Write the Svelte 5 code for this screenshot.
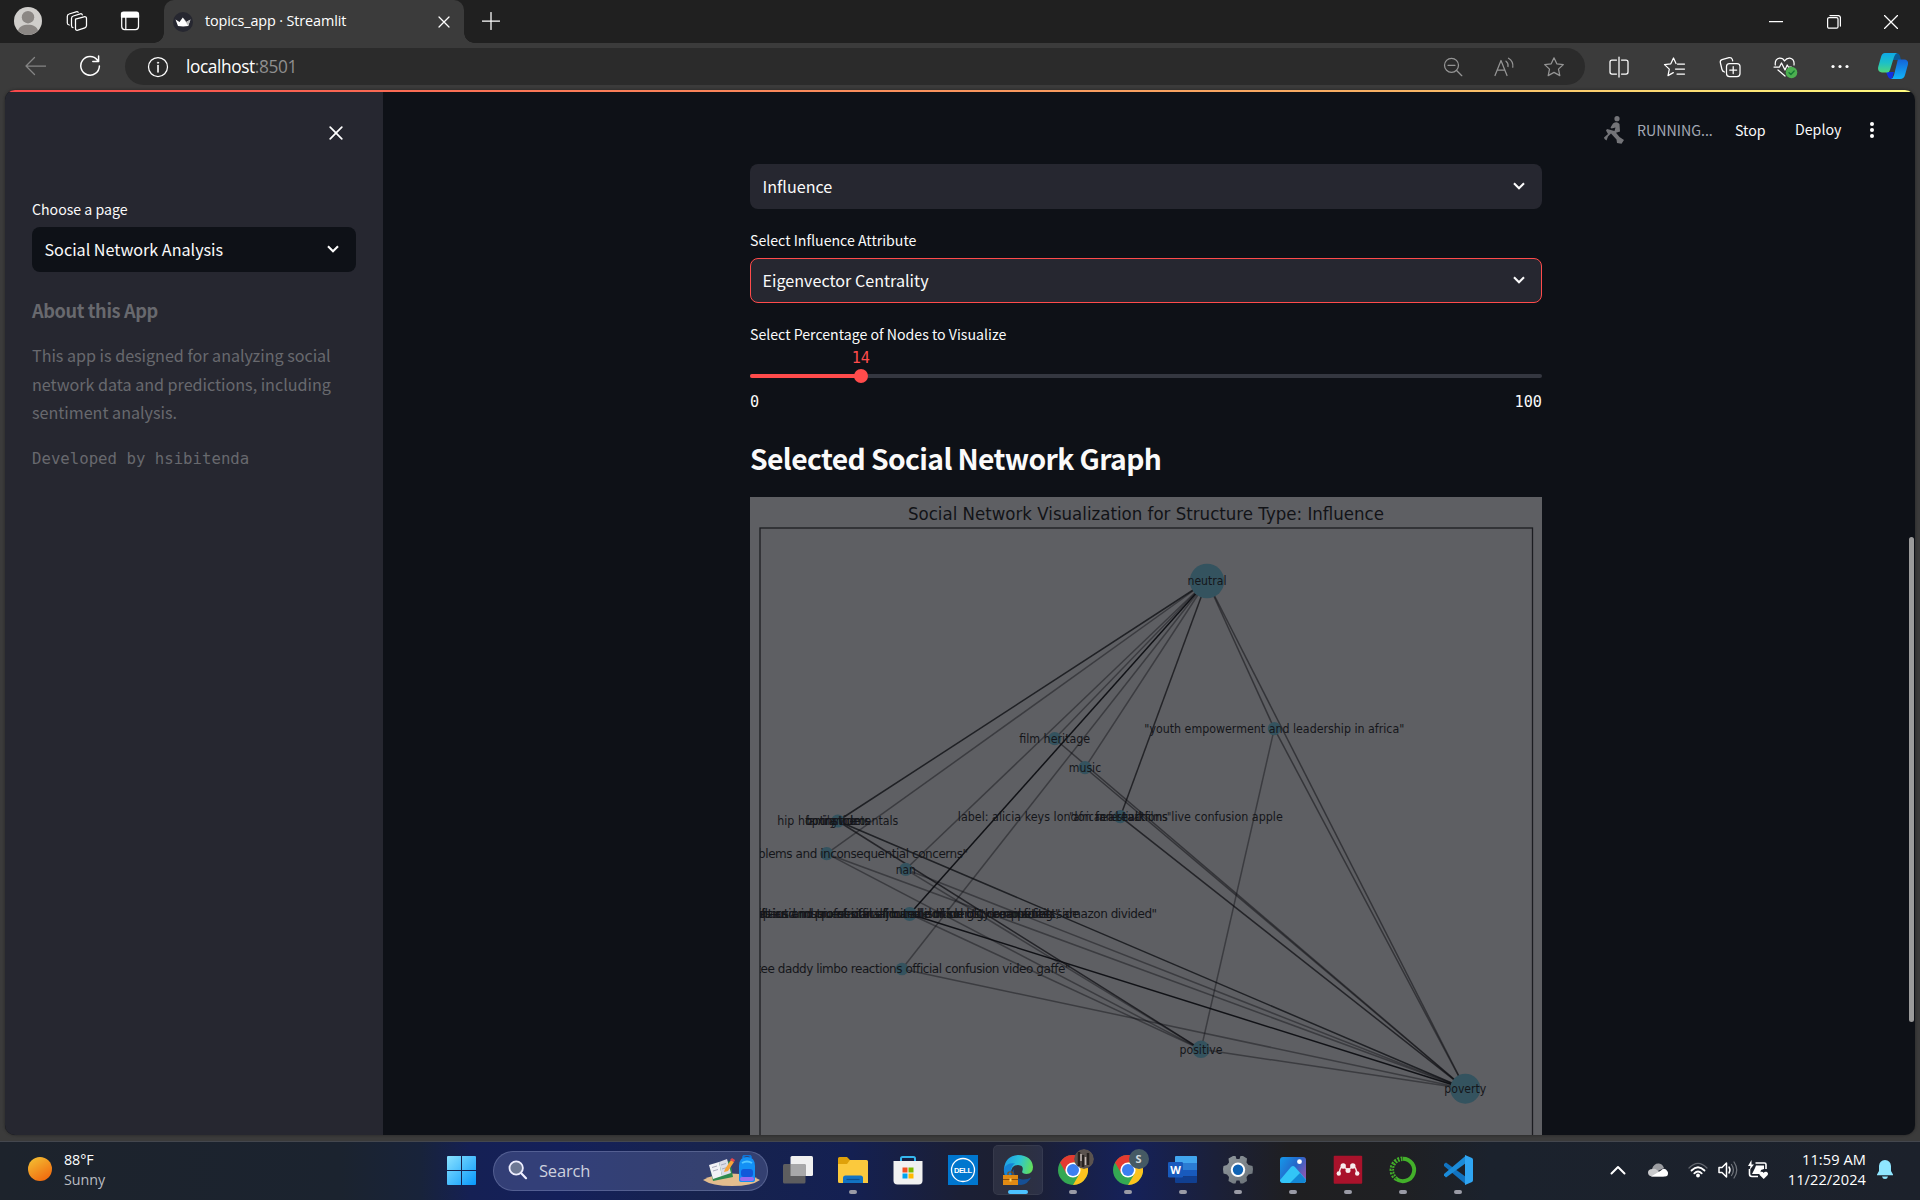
<script>
  const nodes = {
    neutral: { x: 1207, y: 581, r: 17.3 },
    poverty: { x: 1465.3, y: 1088.7, r: 15 },
    positive: { x: 1201, y: 1049.3, r: 8.7 },
    family: { x: 837.8, y: 821, r: 6.6 },
    concerns: { x: 826.7, y: 853.7, r: 6.6 },
    nan: { x: 905.7, y: 869.3, r: 6.6 },
    amazon: { x: 909.7, y: 914, r: 7 },
    daddy: { x: 902, y: 969, r: 6.3 },
    label: { x: 1120.3, y: 816.7, r: 6.6 },
    film: { x: 1054.7, y: 738.7, r: 6.6 },
    music: { x: 1085, y: 767.7, r: 6.6 },
    youth: { x: 1274.3, y: 728.7, r: 6.6 }
  };

  // from, to, line opacity
  const edges = [
    ['neutral', 'family', 0.75], ['neutral', 'concerns', 0.42], ['neutral', 'nan', 0.42],
    ['neutral', 'amazon', 0.92], ['neutral', 'daddy', 0.42], ['neutral', 'film', 0.42],
    ['neutral', 'music', 0.42], ['neutral', 'label', 0.7], ['neutral', 'youth', 0.5],
    ['neutral', 'poverty', 0.5], ['poverty', 'family', 0.75], ['poverty', 'concerns', 0.42],
    ['poverty', 'nan', 0.42], ['poverty', 'amazon', 0.92], ['poverty', 'daddy', 0.42],
    ['poverty', 'film', 0.5], ['poverty', 'music', 0.5], ['poverty', 'label', 0.7],
    ['poverty', 'youth', 0.5], ['poverty', 'positive', 0.42], ['positive', 'family', 0.7],
    ['positive', 'concerns', 0.42], ['positive', 'nan', 0.42], ['positive', 'amazon', 0.42],
    ['positive', 'youth', 0.42]
  ];

  // centred labels: node, text, width
  const labels = [
    ['neutral', 'neutral', 39], ['poverty', 'poverty', 42], ['positive', 'positive', 43],
    ['film', 'film heritage', 71], ['music', 'music', 32.3], ['nan', 'nan', 20],
    ['youth', '"youth empowerment and leadership in africa"', 260],
    ['label', 'label: alicia keys london fan reactions live confusion apple', 325],
    ['label', '"african festival films"', 102], ['label', 'real talk', 50],
    ['family', 'hip hop instrumentals', 121], ['family', 'family videos', 65], ['family', 'boxing tickets', 62],
    ['family', 'trance', 36]
  ];

  // labels cut by the left border of the axes: right end, baseline, text
  const cut = [
    [967.7, 858, 'world problems and inconsequential concerns"'],
    [1070, 973.2, 'yankee daddy limbo reactions official confusion video gaffe"'],
    [1156.7, 918.2, '"e-therapeutic instrumental africa and mind of the rainforest, amazon divided"'],
    [1079, 918.2, 'history, politics and professional journalism identity competing side'],
    [1060, 918.2, '"complexities and music africans limited edition big dreams fails"'],
    [1048, 918.2, 'shopping lift-ins and quest official bundle of songs, complaints']
  ];
  const sliderValue = 14;
</script>

{#snippet chevron()}
  <svg class="chev" viewBox="0 0 14 10"><path d="M2 2.3l5 5 5-5" /></svg>
{/snippet}

{#snippet chrome()}
  <svg viewBox="0 0 30 30" width="30" height="30">
    <circle cx="15" cy="15" r="15" fill="#34a853" />
    <path d="M2 7.5A15 15 0 0 1 28 7.5H15L8.5 18.8Z" fill="#e53a30" />
    <path d="M28 7.5A15 15 0 0 1 15 30L21.5 18.8 15 7.5Z" fill="#fcc31e" />
    <circle cx="15" cy="15" r="7.6" fill="#fff" /><circle cx="15" cy="15" r="6" fill="#3b7ff0" />
  </svg>
{/snippet}

<div class="desktop">
  <div class="titlebar">
    <svg class="avatar" viewBox="0 0 28 28"><circle cx="14" cy="14" r="14" fill="#d0cecb" /><circle cx="14" cy="10.2" r="6.2" fill="#8b8784" /><path d="M4 23.8C5 19.5 9 17.8 14 17.8s9 1.7 10 6A14 14 0 0 1 4 23.800Z" fill="#8b8784" /></svg>
    <svg class="ln spaces" viewBox="0 0 24 24"><path d="M10.5 10.200l8.500-2.400q2.500-.5 2.500 1.800v7q0 1.800-1.600 2.300l-7 2.300q-2.400.6-2.400-1.800z" /><path d="M8 18.500q-1.500 0-1.500-2V9.500q0-2 1.800-2.500l7-2.200q1.700-.3 2 1" /><path d="M4.300 16q-2-.2-2-2V7.500q0-2 1.800-2.500l7-2.200q1.700-.3 2 .5" /></svg>
    <svg class="ln tabact" viewBox="0 0 24 24"><rect x="3.700" y="3.700" width="16.800" height="16.800" rx="3" /><path d="M3.500 4.500q0-1.500 2-1.500h13q2 0 2 2v3h-17z" fill="#fff" /><path d="M7.800 8v12" /></svg>
    <div class="tab">
      <svg class="favicon" viewBox="0 0 20 20"><circle cx="10" cy="10" r="10" fill="#262730" /><path d="M2.500 7.500L6.500 10l3.300-4.500L13.300 10l4.200-2.500-2.300 6.500q-5 .8-10.200 0z" fill="#fff" /><path d="M10 5.500l3.300 4.500 4.200-2.500-2.300 6.500z" fill="#bbb" /></svg>
      <span>topics_app · Streamlit</span>
      <svg class="ln tabx" viewBox="0 0 12 12"><path d="M1 1l10 10M11 1L1 11" /></svg>
    </div>
    <svg class="ln plus" viewBox="0 0 18 18"><path d="M9 .5v17M.5 9h17" /></svg>
    <div class="winbtns">
      <svg class="ln" viewBox="0 0 14 14"><path d="M0 6.500h13.500" /></svg>
      <svg class="ln" viewBox="0 0 14 14"><rect x=".6" y="2.600" width="10.400" height="10.600" rx="1.500" /><path d="M3 .6h8.200q2.200 0 2.200 2.200V11" /></svg>
      <svg class="ln" viewBox="0 0 14 14"><path d="M.5 .5l13 13M13.500 .5l-13 13" /></svg>
    </div>
  </div>

  <div class="toolbar">
    <svg class="ln back" viewBox="0 0 22 22"><path d="M10.500 2.500L2 11l8.500 8.500M2 11h19.500" /></svg>
    <svg class="ln reload" viewBox="0 0 22 22"><path d="M18.500 5.200A9.300 9.300 0 1 0 20.400 11M19.600 1v5.600h-5.800" /></svg>
    <div class="address">
      <svg class="ln info" viewBox="0 0 22 22"><circle cx="11" cy="11" r="9.500" /><path d="M11 9.500v6.500" stroke-width="1.600" /><circle cx="11" cy="6.700" r=".7" fill="#fff" stroke-width=".6" /></svg>
      <span class="url">localhost<i>:8501</i></span>
      <div class="addr-icons">
        <svg class="ln" viewBox="0 0 22 22"><circle cx="9.500" cy="9.300" r="7" /><path d="M14.600 14.500l5.200 5.200M6 9.300h7" /></svg>
        <svg class="ln read" viewBox="0 0 22 22"><path d="M2 19.500L8 4.500l6 15M4.200 14.200h7.700" /><path d="M13 5.200q2.500 1.800 2 5.300M15.500 2.200q5 3 4.300 9" /></svg>
        <svg class="ln" viewBox="0 0 22 22"><path d="M11 1.800l2.800 6 6.500.8-4.800 4.500 1.300 6.500L11 16.400l-5.800 3.200 1.300-6.500L1.700 8.600l6.500-.8z" /></svg>
      </div>
    </div>
    <div class="tools">
      <svg class="ln" viewBox="0 0 22 22"><path d="M8.500 4H4Q2 4 2 6v10q0 2 2 2h4.500M13.500 4H18q2 0 2 2v10q0 2-2 2h-4.500M11 1v20" /></svg>
      <svg class="ln" viewBox="0 0 22 22"><path d="M13 7.500L10.500 2 7.800 7.800l-6.300.8 4.800 4.500L5 19.600l5.300-3M14.500 8h7M12.500 13h9M14 18h7.500" /></svg>
      <svg class="ln" viewBox="0 0 22 22"><rect x="7.500" y="7.500" width="13.500" height="13" rx="3" /><path d="M14.200 10.500v7M10.700 14h7" /><path d="M5.500 16Q3.500 15.500 3 13.500L1.300 6.500Q1 4.300 3 3.600l7-2q2.500-.5 3.300 1.800l.4 1.400" /></svg>
      <svg class="ln" viewBox="0 0 22 22"><path d="M1.300 9Q.7 3 5.500 2.200 9 2 10.500 5 12.500 2 15.800 2.200 20.700 3 20 9M0 11h5.500l2-4 3.500 7 2.200-5 1.200 2h3M4 14l7 6" /><circle cx="17.500" cy="16.500" r="5.800" fill="#4caf50" stroke="none" /><path d="M15 16.700l1.900 1.800 3.300-3.500" stroke="#173" /></svg>
      <svg viewBox="0 0 22 22" fill="#fff"><circle cx="4" cy="10.500" r="1.600" /><circle cx="11" cy="10.500" r="1.600" /><circle cx="18" cy="10.500" r="1.600" /></svg>
    </div>
    <svg class="copilot" viewBox="0 0 30 28">
      <defs>
        <linearGradient id="cpA" x1="0" y1="0" x2="0" y2="1"><stop offset="0" stop-color="#0fa9e6" /><stop offset=".5" stop-color="#1cc0c8" /><stop offset="1" stop-color="#4fd67a" /></linearGradient>
        <linearGradient id="cpB" x1="0" y1="0" x2="0" y2="1"><stop offset="0" stop-color="#1463d8" /><stop offset="1" stop-color="#12b4f8" /></linearGradient>
      </defs>
      <path d="M15 1h3q3 0 4 3l1 4h-8z" fill="#0c5a96" />
      <path d="M8 20h8l-2 7q-3.500 0-4.500-3.500z" fill="#1030e0" />
      <path d="M7 1h12q-2 1-3 4l-4 13q-.7 2.500-3 2.500H4q-5-.5-3.700-6L3 5Q4 1 7 1z" fill="url(#cpA)" />
      <path d="M20 7.500h6.500q4.500.5 3.300 5.500L27 23q-1 4-5 4h-9q2-.5 3-4l3-12q.4-2.500 1-3.500z" fill="url(#cpB)" />
    </svg>
  </div>

  <div class="viewport">
    <div class="sidebar">
      <svg class="ln side-x" viewBox="0 0 14 14"><path d="M1.200 1.200l11.600 11.600M12.800 1.200L1.200 12.800" /></svg>
      <div class="label first">Choose a page</div>
      <div class="select dark"><span>Social Network Analysis</span>{@render chevron()}</div>
      <h3>About this App</h3>
      <p>This app is designed for analyzing social<br />network data and predictions, including<br />sentiment analysis.</p>
      <code>Developed by hsibitenda</code>
    </div>

    <div class="main">
      <div class="header">
        <svg class="runner" viewBox="0 0 20 28"><circle cx="13" cy="2.700" r="2.600" /><path d="M9 7.500q4-2.500 6.500.5l.5 7.500-4 1.200 3.500 4.300 4.500 3-2.500 3.700-4.500-.7-.5-3.500L7 17.500l-3 3-1.500 4L.5 23 0 21.500l4-3.500L2 14.500l1-1.500L10.500 15l1-3.500-4 1-1-1z" /></svg>
        <span class="running">RUNNING...</span>
        <span class="stop">Stop</span>
        <span class="deploy">Deploy</span>
        <svg class="kebab" viewBox="0 0 6 16"><circle cx="3" cy="2" r="2" /><circle cx="3" cy="8" r="2" /><circle cx="3" cy="14" r="2" /></svg>
      </div>
      <div class="column">
        <div class="select"><span>Influence</span>{@render chevron()}</div>
        <div class="label">Select Influence Attribute</div>
        <div class="select active"><span>Eigenvector Centrality</span>{@render chevron()}</div>
        <div class="label slider-label">Select Percentage of Nodes to Visualize</div>
        <div class="value"><span style="width: {sliderValue * 2}%">{sliderValue}</span></div>
        <div class="track"><div class="fill" style="width: {sliderValue}%"></div><div class="thumb"></div></div>
        <div class="ends"><span>0</span><span>100</span></div>
        <h2>Selected Social Network Graph</h2>
        <svg class="plot" viewBox="750 497 792 638" width="792" height="638">
          <defs><clipPath id="axes"><rect x="760" y="528" width="773" height="610" /></clipPath></defs>
          <rect x="750" y="497" width="792" height="638" fill="#5e5f63" />
          <text x="1146" y="520.300" text-anchor="middle" textLength="476" lengthAdjust="spacingAndGlyphs" class="ptitle">Social Network Visualization for Structure Type: Influence</text>
          <rect x="760" y="528" width="772.500" height="640" fill="none" stroke="#1c1d21" stroke-width="1.300" />
          {#each edges as [a, b, o]}
            <line x1={nodes[a].x} y1={nodes[a].y} x2={nodes[b].x} y2={nodes[b].y} stroke="#0b0c10" stroke-opacity={o} stroke-width="1.500" />
          {/each}
          {#each Object.values(nodes) as n}
            <circle cx={n.x} cy={n.y} r={n.r} fill="#34535f" />
          {/each}
          {#each labels as [k, text, w]}
            <text x={nodes[k].x} y={nodes[k].y + 4.200} text-anchor="middle" textLength={w} lengthAdjust="spacingAndGlyphs" class="nl">{text}</text>
          {/each}
          <g clip-path="url(#axes)">
            {#each cut as [x, y, text]}
              <text {x} {y} text-anchor="end" class="nl tight">{text}</text>
            {/each}
          </g>
        </svg>
      </div>
    </div>
    <div class="progress"></div>
    <div class="scrollbar"></div>
  </div>

  <div class="taskbar">
    <svg class="sun" viewBox="0 0 24 24"><defs><linearGradient id="sun" x1=".2" y1="0" x2=".8" y2="1"><stop offset="0" stop-color="#f2bd32" /><stop offset="1" stop-color="#f2660d" /></linearGradient></defs><circle cx="12" cy="12" r="12" fill="url(#sun)" /></svg>
    <div class="weather"><span>88°F</span><span class="dim">Sunny</span></div>
    <svg class="win" viewBox="0 0 29 29"><defs><linearGradient id="wl" x1="0" y1="0" x2="1" y2="1"><stop offset="0" stop-color="#8ae2ff" /><stop offset="1" stop-color="#0798fb" /></linearGradient></defs><path fill="url(#wl)" d="M1 0h13v14H0V1q0-1 1-1zM15 0h13q1 0 1 1v13H15zM0 15h14v14H1q-1 0-1-1zM15 15h14v13q0 1-1 1H15z" /></svg>
    <div class="search">
      <svg class="mag" viewBox="0 0 20 20"><circle cx="8.200" cy="8" r="6.700" fill="#6d7894" stroke="#eef" stroke-width="1.800" /><path d="M13 13l5 5.200" stroke="#eef" stroke-width="2.200" stroke-linecap="round" /></svg>
      <span>Search</span>
      <svg class="art" viewBox="0 0 57 32">
        <path d="M0 25q10-6 28-6.500Q47 19 57 25q-8 6-28 6T0 25z" fill="#e3bd8e" />
        <path d="M7 12l20-6 3 16-20 4z" fill="#2f8b4e" /><path d="M6 10l10-3 3 14-9 3z" fill="#f2f2f7" /><path d="M16 7l8-3 4 14-9 3z" fill="#dcdde8" />
        <path d="M9 12.500l5-1.500M10 16l5-1.500M18 10l5-1.500M19 14l5-1.500" stroke="#a9abbd" />
        <path d="M22 14l6-9 3 2-6 9-4 1z" fill="#f6a43a" /><path d="M27 5l2-2 3 2-1 2z" fill="#e5484d" />
        <path d="M40 3q0-3 4-3t4 3" fill="none" stroke="#1274d6" stroke-width="2" />
        <path d="M36 11q0-9 8-9t8 9v14q0 2-3 2H39q-3 0-3-2z" fill="#1390f5" /><rect x="38" y="14" width="12" height="8" rx="3" fill="#1259da" /><rect x="37" y="22" width="14" height="4" rx="2" fill="#9a6cf0" /><path d="M39 8q5-3 10 0" fill="none" stroke="#53c6ff" stroke-width="2" />
      </svg>
    </div>
    <div class="apps">
      <div class="app"><svg viewBox="0 0 30 30"><rect x="7.500" y="1" width="22.500" height="20" rx="1.500" fill="#f0f0f0" /><rect x="0" y="9" width="22.500" height="19.500" rx="1.500" fill="#5d5d5f" /><path d="M7.500 9h15v12h-15z" fill="#a8a8a9" /></svg></div>
      <div class="app run"><svg viewBox="0 0 30 30"><path d="M0 3.500Q0 2 1.500 2H9l3 3h16v8H0z" fill="#dfa10a" /><path d="M0 9h9l3-4h16.500Q30 5 30 6.500V28H1.500Q0 28 0 26.500z" fill="#fbc93d" /><path d="M5 28v-5q0-2.500 2.500-2.500h15Q25 20.500 25 23v5z" fill="#1273c4" /><path d="M8.500 24.500h13" stroke="#0b4f91" stroke-width="1.200" /></svg></div>
      <div class="app"><svg viewBox="0 0 30 30"><path d="M8 7V3.500Q8 2 9.500 2h11Q22 2 22 3.500V7" fill="none" stroke="#35b7ee" stroke-width="2" /><path d="M.5 6h29v19.500q0 4-4 4h-21q-4 0-4-4z" fill="#f1f1f1" /><path fill="#f25022" d="M9.500 12.500h5v5h-5z" /><path fill="#7fba00" d="M15.500 12.500h5v5h-5z" /><path fill="#00a4ef" d="M9.500 18.500h5v5h-5z" /><path fill="#ffb900" d="M15.500 18.500h5v5h-5z" /></svg></div>
      <div class="app"><svg viewBox="0 0 30 30"><path fill="#0076ce" d="M0 0h30v30H0z" /><circle cx="15" cy="15" r="11.500" fill="none" stroke="#fff" stroke-width="1.300" /><text x="15" y="18" text-anchor="middle" textLength="18" class="dell">DELL</text></svg></div>
      <div class="app run current"><svg viewBox="0 0 30 30">
        <defs><linearGradient id="eg" x1="0" y1=".3" x2="1" y2=".5"><stop offset="0" stop-color="#1e9de6" /><stop offset=".5" stop-color="#2bc3d8" /><stop offset="1" stop-color="#63df5a" /></linearGradient></defs>
        <path d="M1 14Q2 1 15 0q14 .5 15 12 0 6.500-6.500 7-5.500 0-4-3.500 1.500-5-4.500-5.500-7 0-7 8z" fill="url(#eg)" />
        <path d="M1 13q4-6 11-4.500-5 3-3.500 10 3 8 12 9Q13 32 6 27 0 21 1 13z" fill="#1583d6" />
        <path d="M11 14q-1 9 8 10.500 5 .5 9-2-3 6.500-10 7.500-8-1-10-8 0-5 3-8z" fill="#164f94" />
        <path d="M5 20v-2q0-1 1-1h3q1 0 1 1v2" fill="none" stroke="#8d4f08" stroke-width="1.200" /><path fill="#e18a13" d="M0 20h15v10H0z" /><path d="M0 24.500h15" stroke="#8d4f08" /><path fill="#ffd35c" d="M6.500 23.500h2v3h-2z" />
      </svg></div>
      <div class="app run">{@render chrome()}<svg class="badge" viewBox="0 0 20 20"><circle cx="10" cy="10" r="10" fill="#5b534f" /><path d="M5 3v14M9 6v12M14 4v12" stroke="#26211f" stroke-width="2.500" /><path d="M7 5v7M11.500 8v8" stroke="#c3b9b4" stroke-width="1.500" /></svg></div>
      <div class="app run">{@render chrome()}<span class="badge letter">S</span></div>
      <div class="app run"><svg viewBox="0 0 30 30"><path fill="#41a5ee" d="M8 1h20q1 0 1 1v6H7V2q0-1 1-1z" /><path fill="#2b7cd3" d="M7 8h22v7H7z" /><path fill="#185abd" d="M7 15h22v6.500H7z" /><path fill="#103f91" d="M7 21.500h22V27q0 1-1 1H8q-1 0-1-1z" /><rect y="7" width="15" height="15.500" rx="1.300" fill="#185abd" /><text x="7.500" y="18.800" text-anchor="middle" class="word">W</text></svg></div>
      <div class="app run"><svg viewBox="0 0 30 30"><defs><linearGradient id="gr" x1="0" y1="0" x2="1" y2="1"><stop offset="0" stop-color="#929a9f" /><stop offset="1" stop-color="#686f75" /></linearGradient></defs><path d="M10 1h2.500l1 3h3l1-3H20l4 2.500-.5 4 2 2.500 4 1 .5 3-.5 4.500-4 1-2 2.500.5 4L20 28.500h-2.500l-1-3h-3l-1 3H10L5.500 26l.5-4-2-2.500-3.500-1L0 14l.5-3 3.500-1 2-2.500-.5-4z" fill="url(#gr)" /><circle cx="15" cy="14.800" r="7.200" fill="#fff" /><circle cx="15" cy="14.800" r="5.200" fill="#0f63b4" /></svg></div>
      <div class="app run"><svg viewBox="0 0 30 30"><defs><linearGradient id="ph" x1="0" y1="0" x2="1" y2=".6"><stop offset="0" stop-color="#1599ea" /><stop offset=".6" stop-color="#2565c8" /><stop offset="1" stop-color="#8458b4" /></linearGradient></defs><rect x="2" y="2" width="26" height="26" rx="3" fill="url(#ph)" /><path d="M2 25l11-13q2-1.800 4 0L28 24.500v1q-.5 2.500-3 2.500H5q-2.500 0-3-2.500z" fill="#32c5f7" /><path d="M12 28l10-10 6 7q0 3-3 3z" fill="#1387d4" /><circle cx="21.500" cy="6.700" r="2.400" fill="#fff" /></svg></div>
      <div class="app run"><svg viewBox="0 0 30 30"><rect x=".7" y=".7" width="28.500" height="28" rx="1" fill="#a9122b" /><path d="M6.300 18Q7 11.500 10.200 11.500L15 15l4.800-3.500q3.200 0 4 6.500" fill="none" stroke="#f3dfe2" stroke-width="1.500" /><g fill="#f7eced"><circle cx="10.200" cy="11" r="2.700" /><circle cx="19.800" cy="11" r="2.700" /><circle cx="15" cy="15.500" r="2.500" /><circle cx="5.800" cy="18.500" r="2.200" /><circle cx="24.200" cy="18.500" r="2.200" /></g></svg></div>
      <div class="app run"><svg viewBox="0 0 30 30" fill="none" stroke="#43b02a"><path d="M15 3.700a11.200 11.200 0 1 1-7 20" stroke-width="4" /><path d="M8.500 24A11.200 11.200 0 0 1 14.500 3.700" stroke-width="4.500" stroke-dasharray="2 1.200" /><path d="M8.500 24A11.200 11.200 0 0 1 14.500 3.700" stroke="#1f1f21" stroke-width="1" stroke-dasharray="1.500 2" /></svg></div>
      <div class="app run"><svg viewBox="0 0 30 30"><path d="M1 9l2-1.500L23 22v7.500L1 11z" fill="#1173c0" /><path d="M1 20.500L3 22.500 23 8V.5L1 19z" fill="#1b8bd8" /><path d="M22 0l7 3q1 .5 1 2v20q0 1.500-1 2l-7 3z" fill="#2fa5f2" /></svg></div>
    </div>
    <div class="tray">
      <svg class="ln up" viewBox="0 0 16 10"><path d="M1.500 8.500L8 2l6.500 6.500" stroke-width="2" /></svg>
      <svg class="cloud" viewBox="0 0 20 14"><path d="M4 6q2-6 7-5.500 3.500.3 5 4.500L8 9z" fill="#9b9da1" /><path d="M4 13.500q-4-.5-4-4T4.500 6Q7 5 9 7l7 6.500z" fill="#c9cacc" /><path d="M3 13.500l10-6q2-3 5-1 2 2 2 4 0 3-3 3z" fill="#fff" /></svg>
      <svg class="ln wifi" viewBox="0 0 20 16"><path d="M1 6Q10-3.500 19 6" stroke="#62666e" /><path d="M3.500 8.500q6.500-6.500 13 0" stroke-width="1.800" /><path d="M6.300 11.300q3.700-3.700 7.400 0" stroke-width="1.800" /><circle cx="10" cy="13.500" r="1.900" fill="#fff" stroke="none" /></svg>
      <svg class="ln vol" viewBox="0 0 20 18"><path d="M1 6.500h3L8.500 2v14L4 11.500H1z" stroke-width="1.500" /><path d="M11 6q2 3 0 6" stroke-width="1.500" /><path d="M13.500 3.500q3.800 5.500 0 11M16 1q5.500 8 0 16" stroke="#70747b" /></svg>
      <svg class="batt" viewBox="0 0 20 20"><path d="M7.500 3h9q1.500 0 1.500 1.500V9M1.500 9v5q0 2.500 2.500 2.500h6" fill="none" stroke="#fff" stroke-width="1.600" /><path d="M8 5.500h8V9l-3 1-1 4H4l3-6z" fill="#fff" /><path d="M3.500 0L0 6h2.500L1.500 10 6 4.500H3.500z" fill="#fff" /><path d="M15.700 19l-4-4q-1-2.500 1.300-3.300 2-.3 2.700 1.300.7-1.600 2.700-1.300 2.300.8 1.300 3.300z" fill="#fff" /></svg>
      <div class="clock"><span>11:59 AM</span><span>11/22/2024</span></div>
      <svg class="bell" viewBox="0 0 16 20"><path d="M8 0q5.500.5 6 6v5l2 3.500v.7H0v-.7L2 11V6Q2.500.5 8 0zM5 16.500h6Q10.500 19 8 19t-3-2.500z" fill="#8fe6ff" /></svg>
    </div>
  </div>
</div>

<style>
  :global(body) { margin: 0; background: #3b3b3b; }
  * { box-sizing: border-box; }
  svg { display: block; flex: none; }
  .desktop { width: 1920px; height: 1200px; display: flex; flex-direction: column; overflow: hidden; background: #3b3b3b; color: #fff; font-family: "Open Sans", "Noto Sans", sans-serif; }
  .ln { fill: none; stroke: #fff; stroke-width: 1.25; stroke-linejoin: round; stroke-linecap: round; }

  .titlebar { height: 43px; background: #202020; display: flex; align-items: center; padding-left: 14px; flex: none; }
  .avatar { width: 28px; height: 28px; margin-top: -1px; }
  .spaces { width: 24px; height: 24px; margin: -1px 0 0 23px; }
  .tabact { width: 24px; height: 24px; margin: -1px 0 0 29px; }
  .tab { width: 300px; height: 43px; margin-left: 22px; background: #3b3b3b; border-radius: 10px 10px 0 0; display: flex; align-items: center; padding: 0 14px 0 9px; position: relative; }
  .tab::before, .tab::after { content: ""; position: absolute; bottom: 0; width: 10px; height: 10px; }
  .tab::before { left: -10px; background: radial-gradient(circle at 0 0, #202020 9.500px, #3b3b3b 10px); }
  .tab::after { right: -10px; background: radial-gradient(circle at 100% 0, #202020 9.500px, #3b3b3b 10px); }
  .favicon { width: 20px; height: 20px; }
  .tab span { flex: 1; margin-left: 12px; font-size: 14.4px; line-height: 20px; letter-spacing: -0.12px; margin-top: -2px; }
  .tabx { width: 12px; height: 12px; }
  .plus { width: 18px; height: 18px; margin: -1px 0 0 17.500px; }
  .winbtns { margin-left: auto; padding-right: 22px; display: flex; gap: 43.500px; }
  .winbtns svg { width: 14px; height: 14px; }

  .toolbar { height: 47px; display: flex; align-items: flex-start; flex: none; padding: 5px 12px 0 24px; }
  .back { width: 22px; height: 22px; margin-top: 6.500px; stroke: #858585; }
  .reload { width: 22px; height: 22px; margin: 7px 0 0 33px; stroke-width: 1.5; }
  .address { width: 1460px; height: 37px; margin-left: 24px; background: #2b2b2b; border-radius: 19px; display: flex; align-items: center; padding: 0 20px 0 21.500px; }
  .info { width: 22px; height: 22px; margin-top: 1px; }
  .url { margin: 0 0 0 17.500px; font-size: 17.3px; line-height: 24px; letter-spacing: -0.4px; }
  .url i { font-style: normal; color: #8f8f8f; }
  .addr-icons { margin-left: auto; display: flex; gap: 28.300px; }
  .addr-icons svg { width: 22px; height: 22px; stroke: #959595; }
  .tools { display: flex; gap: 33.200px; margin: 7.500px 0 0 23.200px; }
  .tools svg { width: 22px; height: 22px; overflow: visible; }
  .copilot { width: 30px; height: 28px; margin: 4px 0 0 auto; }

  .viewport { width: 1910px; height: 1045px; margin: 0 5px; border-radius: 10px; overflow: hidden; display: flex; background: #0e1117; flex: none; position: relative; font-family: "Noto Sans CJK SC", "Open Sans", sans-serif; font-size: 16.15px; color: #fafafa; box-shadow: 0 0 3px #222; }
  .progress { position: absolute; left: 0; top: 0; width: 1910px; height: 2px; background: linear-gradient(90deg, #f7484b, #fa7b58 30%, #f7b064 72%, #fffd80); }
  .scrollbar { position: absolute; right: 1px; top: 447px; width: 5px; height: 485px; border-radius: 3px; background: #9b9b9b; }
  .sidebar { width: 378px; background: #262730; padding: 36px 27px 0; display: flex; flex-direction: column; }
  .side-x { width: 14px; height: 14px; margin-left: 297px; stroke-width: 1.7; }
  .label { font-size: 14.15px; line-height: 24px; height: 24px; margin: 19px 0 6px; white-space: nowrap; }
  .label.first { margin-top: 57px; }
  .select { height: 45px; border-radius: 8px; background: #262730; display: flex; align-items: center; justify-content: space-between; padding: 0 16.500px 2px 12.500px; line-height: 24px; white-space: nowrap; }
  .select.dark { background: #0e1117; width: 324px; }
  .select.active { border: 1px solid #ff4b4b; padding: 0 15.500px 2px 11.500px; }
  .chev { width: 14px; height: 10px; fill: none; stroke: #fafafa; stroke-width: 2.1; }
  h3 { margin: 23px 0 0; font-size: 18.2px; line-height: 30px; letter-spacing: -0.38px; font-weight: 700; color: #68696e; }
  p { margin: 16px 0 0; line-height: 28.700px; color: #68696e; white-space: nowrap; letter-spacing: -0.02px; }
  code { margin-top: 20px; font-family: "DejaVu Sans Mono", monospace; font-size: 15.7px; line-height: 24px; color: #68696e; }

  .main { flex: 1; padding-top: 2px; }
  .header { height: 72px; padding: 4px 40px 0 0; display: flex; align-items: center; justify-content: flex-end; font-size: 14.2px; line-height: 24px; }
  .runner { width: 20px; height: 28px; fill: #737478; }
  .running { margin-left: 13px; width: 76px; color: #a3a8b4; }
  .stop { margin-left: 22px; width: 31px; }
  .deploy { margin-left: 29px; width: 47px; margin-top: -2px; }
  .kebab { width: 6px; height: 16px; margin-left: 27px; fill: #fff; }
  .column { width: 792px; margin-left: 367px; }
  .value { height: 22px; margin-top: -5px; font: 15.2px/22px "DejaVu Sans Mono", monospace; color: #ff4b4b; }
  .value span { display: block; text-align: center; }
  .slider-label { margin-bottom: 6px; }
  .track { height: 4px; margin-top: 5px; border-radius: 2px; background: #343740; display: flex; align-items: center; }
  .fill { height: 4px; border-radius: 2px; background: #ff4b4b; }
  .thumb { width: 14px; height: 14px; border-radius: 7px; margin-left: -7px; background: #ff4b4b; flex: none; }
  .ends { height: 22px; margin-top: 13px; display: flex; justify-content: space-between; font: 15.2px/22px "DejaVu Sans Mono", monospace; }
  h2 { margin: 25px 0 19px; font-size: 28.3px; line-height: 40px; letter-spacing: -0.62px; font-weight: 700; white-space: nowrap; }
  .ptitle { font: 17px "DejaVu Sans", sans-serif; fill: #121317; }
  .nl { font: 12px "DejaVu Sans", sans-serif; fill: #15161a; }
  .tight { letter-spacing: -0.44px; }

  .taskbar { height: 59px; margin-top: 6px; flex: none; display: flex; align-items: center; padding: 0 27px 0 28px; border-top: 1px solid #44474e; background: linear-gradient(90deg, #1d232c 0, #1b232f 340px, #18233a 420px, #152054 470px, #14205a 560px, #17234e 700px, #142052 850px, #1b1f35 960px, #1c1f30 1020px, #15215a 1130px, #1b2039 1215px, #1f1f21 1290px, #1f2023 1400px, #1b222d 1490px, #1c212b 100%); }
  .sun { width: 24px; height: 24px; margin-top: -4px; }
  .weather { margin: -3px 0 0 12px; width: 60px; display: flex; flex-direction: column; font-size: 14.3px; line-height: 20px; letter-spacing: -0.05px; }
  .dim { color: #b9bcc1; }
  .win { width: 29px; height: 29px; margin: -1px 0 0 323px; }
  .search { width: 275px; height: 40px; margin: -1px 0 0 17px; border-radius: 20px; background: rgba(150, 165, 220, 0.24); border: 1px solid rgba(180, 190, 230, 0.25); display: flex; align-items: center; padding: 0 7px 0 14px; }
  .mag { width: 20px; height: 20px; margin-top: -1px; fill: none; }
  .search span { margin: -1px 0 0 11px; font-size: 16.5px; color: #cdd1de; letter-spacing: -0.2px; }
  .art { width: 57px; height: 32px; margin-left: auto; }
  .apps { display: flex; margin: -2px 0 0 2.500px; }
  .app { width: 55px; height: 50px; display: flex; align-items: center; justify-content: center; position: relative; }
  .app svg { width: 30px; height: 30px; }
  .app.run::after { content: ""; position: absolute; bottom: 1px; left: 23.500px; width: 8px; height: 4px; border-radius: 2px; background: #9a9ba6; }
  .app.current { width: 50px; margin: 0 2.500px; background: rgba(255, 255, 255, 0.08); border-radius: 5px; box-shadow: inset 0 0 0 1px rgba(255, 255, 255, 0.05); }
  .app.current::after { left: 15px; width: 20px; background: #4cc2ff; }
  .app .badge { position: absolute; left: 28px; top: 4px; width: 20px; height: 20px; border-radius: 10px; }
  .letter { background: #455a64; color: #cfd8dc; font-size: 11px; font-weight: 700; line-height: 20px; text-align: center; }
  .dell { font: 700 7.500px "Liberation Sans", sans-serif; fill: #fff; }
  .word { font: 700 11px "Open Sans", sans-serif; fill: #fff; }
  .tray { margin: -2px 0 0 auto; display: flex; align-items: center; }
  .up { width: 16px; height: 10px; }
  .cloud { width: 20px; height: 14px; margin-left: 22px; }
  .wifi { width: 20px; height: 16px; margin-left: 20px; }
  .vol { width: 20px; height: 18px; margin-left: 10px; }
  .batt { width: 20px; height: 20px; margin-left: 10px; }
  .clock { width: 90px; margin: -2px 0 0 8px; display: flex; flex-direction: column; align-items: flex-end; font-size: 14.600px; line-height: 20px; letter-spacing: 0.08px; white-space: nowrap; }
  .bell { width: 16px; height: 20px; margin-left: 11px; }
</style>
